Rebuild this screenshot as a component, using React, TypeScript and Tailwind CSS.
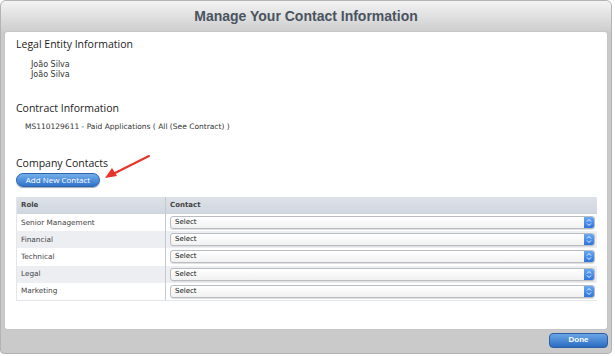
const rows = [
  { role: "Senior Management", alt: false },
  { role: "Financial", alt: true },
  { role: "Technical", alt: false },
  { role: "Legal", alt: true },
  { role: "Marketing", alt: false },
];

const SelectBox = () => {
  return (
    <div className="flex-1 h-[13px] flex items-center rounded-[3px] border border-[#b9bcc1] bg-gradient-to-b from-white to-[#f1f1f1] shadow-[0_1px_0_#e0e0e0] overflow-hidden">
      <span className="flex-1 pl-[4px] text-[7px] leading-none text-[#111] font-['DejaVu_Sans',sans-serif]">Select</span>
      <span className="w-[10px] h-full flex items-center justify-center bg-gradient-to-b from-[#6aa8f2] to-[#2f74dc]">
        <svg width="6" height="9" viewBox="0 0 6 9">
          <path d="M1 3.5 L3 1.5 L5 3.5 M1 5.5 L3 7.5 L5 5.5" stroke="white" strokeWidth="0.9" fill="none" />
        </svg>
      </span>
    </div>
  );
};

export default function App() {
  return (
    <div className="w-[615px] h-[356px] bg-white font-['Liberation_Sans',sans-serif]">
      <div className="relative w-[612px] h-[354px] flex flex-col bg-[#cacaca] rounded-t-[6px] rounded-b-[4px] border border-[#b3b3b3] overflow-hidden">
        {/* Title bar */}
        <div className="h-[31px] shrink-0 flex items-center justify-center bg-gradient-to-b from-[#f3f3f3] to-[#cdcdcd]">
          <h1 className="text-[14px] font-bold text-[#4a5461]">Manage Your Contact Information</h1>
        </div>

        {/* Panel */}
        <div className="mx-[4px] h-[297px] shrink-0 bg-white rounded-[2px] shadow-[0_0_1px_#999] px-[11px] flex flex-col font-['Open_Sans',sans-serif]">
          <h2 className="mt-[5px] text-[10.5px] leading-[14px] text-[#222]">Legal Entity Information</h2>
          <div className="mt-[9px] pl-[15px] text-[8px] leading-[10px] text-[#333] font-['DejaVu_Sans',sans-serif]">
            <div>João Silva</div>
            <div>João Silva</div>
          </div>

          <h2 className="mt-[21px] text-[10.5px] leading-[14px] text-[#222]">Contract Information</h2>
          <div className="mt-[7px] pl-[9px] text-[7.5px] leading-[10px] text-[#333] font-['DejaVu_Sans',sans-serif]">
            MS110129611 - Paid Applications ( All (See Contract) )
          </div>

          <h2 className="mt-[24px] text-[10.5px] leading-[14px] text-[#222]">Company Contacts</h2>
          <button className="mt-[3px] w-[84px] h-[14px] rounded-full border border-[#2d64ad] bg-gradient-to-b from-[#74b0ec] to-[#2f72c9] text-white text-[8px] leading-none shadow-[0_1px_1px_#9ab]">
            Add New Contact
          </button>

          {/* Table */}
          <div className="mt-[10px] w-[581px] border-l border-b border-[#e3e6ea]">
            <div className="h-[17px] flex bg-gradient-to-b from-[#dde2e8] to-[#d0d6de] text-[7px] text-[#444] font-bold font-['DejaVu_Sans',sans-serif]">
              <div className="w-[149px] flex items-center pl-[4px] border-r border-[#c5cad2]">Role</div>
              <div className="flex-1 flex items-center pl-[4px]">Contact</div>
            </div>
            {rows.map((r) => (
              <div key={r.role} className={`h-[17.2px] flex ${r.alt ? "bg-[#eceef2]" : "bg-white"}`}>
                <div className="w-[149px] flex items-center pl-[4px] pt-[1px] border-r border-[#c5cad2] text-[7.3px] text-[#444] font-['DejaVu_Sans',sans-serif]">
                  {r.role}
                </div>
                <div className="flex-1 flex items-center pl-[4px] pr-[2px]">
                  <SelectBox />
                </div>
              </div>
            ))}
          </div>
        </div>

        {/* Footer */}
        <div className="flex-1 flex items-center justify-end pr-[3px] pb-[2px]">
          <button className="w-[59px] h-[15px] rounded-[4px] border border-[#2d5fa5] bg-gradient-to-b from-[#6aa6e6] to-[#2b6cc2] text-white text-[8px] font-bold leading-none">
            Done
          </button>
        </div>

        {/* Red annotation arrow */}
        <svg className="absolute left-[100px] top-[152px]" width="52" height="30" viewBox="0 0 52 30">
          <line x1="48" y1="3" x2="14" y2="20" stroke="#e8322a" strokeWidth="2" strokeLinecap="round" />
          <path d="M4 25 L11 15 L16 23 Z" fill="#e8322a" />
        </svg>
      </div>
    </div>
  );
}
